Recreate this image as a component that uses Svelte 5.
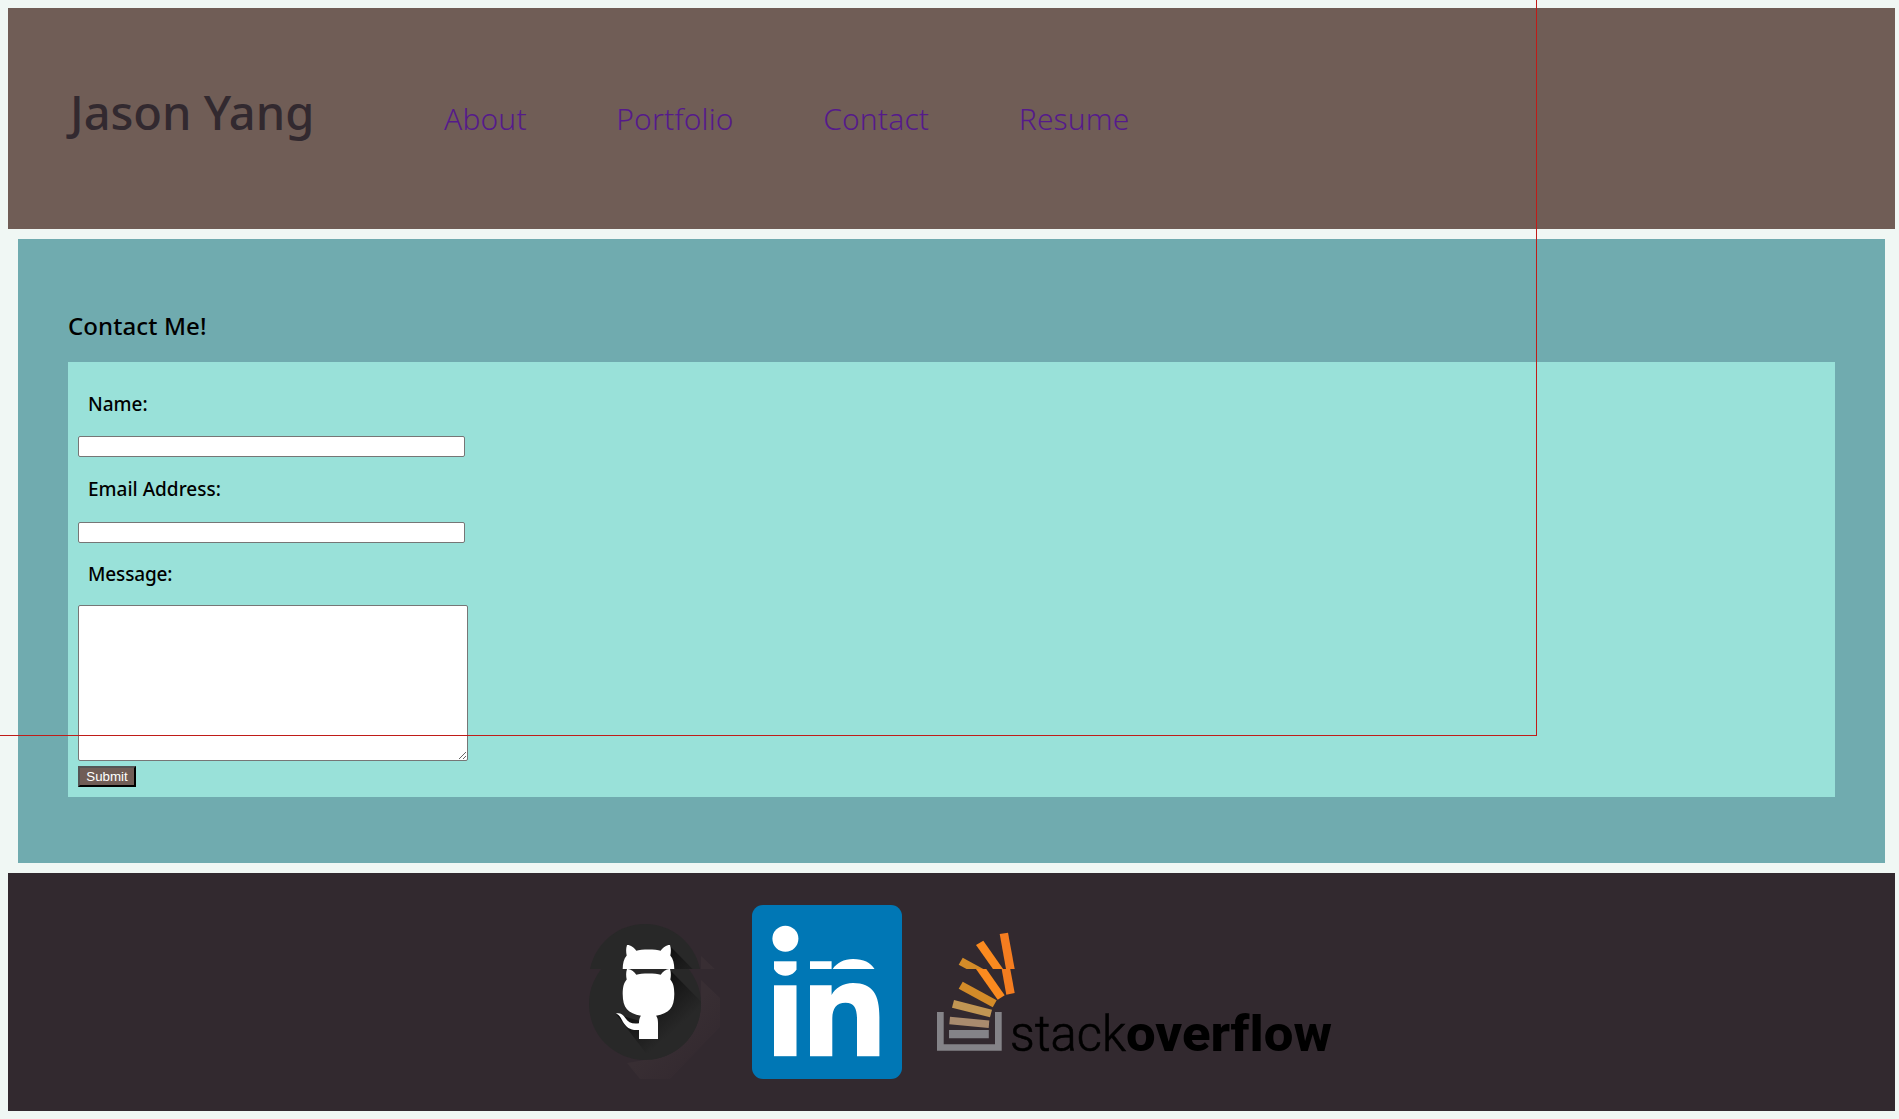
<script>
  const links = ['About', 'Portfolio', 'Contact', 'Resume'];
</script>

{#snippet github()}
  <circle cx="75" cy="75" r="56" fill="#282828" />
  <path d="M131 51L150 69V98L100 150H70L57 134L75 131A56 56 0 0 0 131 75Z" fill="url(#haze)" />
  <path d="M100 41L131 72.500A56 56 0 0 1 81 130.700L46 85L70 92L80 60Z" fill="url(#shade)" />
  <path
    d="M57 40C60.500 39.800 64 42.500 66.300 45.700C71 44 86 44 90.700 45.700C93 42.500 96.500 39.800 100 40C101.200 43.500 101 47.500 100.300 50.500C103.500 54 104.300 59 104.300 65C104.300 79 99 84.500 86 86.700C87.500 88.300 88 91 88 94V110H69V101C60.500 101.800 56.500 98.500 53 93C51 89 49.500 86 46 84.500C50 83.500 53 85.500 55.300 89C58.500 93.500 62 95.300 69 94.300C69 91 69.500 88.500 71 86.700C58 84.500 52.700 79 52.700 65C52.700 59 53.500 54 56.700 50.500C56 47.500 55.800 43.500 57 40Z"
    fill="#fff"
  />
{/snippet}

{#snippet linkedin()}
  <circle cx="33.400" cy="33.700" r="13" fill="#fff" />
  <rect x="22" y="56.300" width="22.500" height="70.900" fill="#fff" />
  <path d="M58 56.300H79.600V66C83 59 91 54 101 54C121 54 127.400 66 127.400 88V127.200H105V90C105 80 102.500 73.700 93.500 73.700C84 73.700 80.300 80 80.300 90V127.200H58Z" fill="#fff" />
{/snippet}

{#snippet stack()}
  <path d="M3 83H9.700V115.300H61V83H67.700V121.700H3Z" fill="#848388" />
  <path d="M15 101H54.800V109.300H15Z" fill="#848388" />
  <path d="M16 87.700L55.300 91.400L54.700 99L15.300 95.300Z" fill="#a98b6e" />
  <path d="M20 71L58 80.700L56 88.300L18 78.700Z" fill="#c19653" />
  <path d="M28.700 52.700L62.700 71.300L58.700 78.300L24.700 59.700Z" fill="#d38b28" />
  <path d="M49.300 35.700L70.700 66.300L63.700 70.700L42 40Z" fill="#fa8a1f" />
  <path d="M65.700 29L74 27.700L80.700 64L72.300 65.700Z" fill="#f47d20" />
{/snippet}

<div class="page">
  <header>
    <h1>Jason Yang</h1>
    <nav>
      {#each links as link}
        <a href="#{link.toLowerCase()}">{link}</a>
      {/each}
    </nav>
  </header>

  <main>
    <h2>Contact Me!</h2>
    <form>
      <label for="name">Name:</label>
      <input id="name" type="text" />
      <label class="email" for="email">Email Address:</label>
      <input id="email" type="text" />
      <label class="message" for="message">Message:</label>
      <textarea id="message"></textarea>
      <button type="button">Submit</button>
    </form>
  </main>

  <footer>
    <svg width="150" height="174" viewBox="0 0 150 174">
      <defs>
        <clipPath id="upper"><rect width="400" height="64" /></clipPath>
        <clipPath id="lower"><rect y="64" width="400" height="110" /></clipPath>
        <linearGradient id="shade" gradientUnits="userSpaceOnUse" x1="75" y1="65" x2="106" y2="100">
          <stop offset="0" stop-color="#101010" />
          <stop offset="1" stop-color="#282828" />
        </linearGradient>
        <linearGradient id="haze" gradientUnits="userSpaceOnUse" x1="100" y1="100" x2="128" y2="128">
          <stop offset="0" stop-color="#382e33" />
          <stop offset="1" stop-color="#342a30" />
        </linearGradient>
      </defs>
      <g clip-path="url(#upper)">{@render github()}</g>
      <g clip-path="url(#lower)"><g transform="translate(0 24)">{@render github()}</g></g>
    </svg>
    <svg width="150" height="174" viewBox="0 0 150 174">
      <rect width="150" height="174" rx="11" fill="#0077b5" />
      <g clip-path="url(#upper)">{@render linkedin()}</g>
      <g clip-path="url(#lower)"><g transform="translate(0 24)">{@render linkedin()}</g></g>
    </svg>
    <svg width="399" height="174" viewBox="0 0 399 174">
      <g clip-path="url(#upper)">{@render stack()}</g>
      <g clip-path="url(#lower)"><g transform="translate(0 24)">{@render stack()}</g></g>
      <text class="thin" x="76" y="145.500" textLength="116" lengthAdjust="spacingAndGlyphs">stack</text>
      <text class="heavy" x="192" y="145.500" textLength="206" lengthAdjust="spacingAndGlyphs">overflow</text>
    </svg>
  </footer>
  <div class="guide"></div>
</div>

<style>
  :global(body) {
    background: #f0f7f4;
  }
  .page {
    position: relative;
    box-sizing: border-box;
    height: 1119px;
    padding: 8px 4px 8px 8px;
    font-family: 'Noto Sans', 'Open Sans', sans-serif;
    overflow: hidden;
  }
  header {
    display: flex;
    align-items: baseline;
    box-sizing: border-box;
    height: 221px;
    padding: 70px 62px 0;
    background: #705d56;
  }
  h1 {
    width: 374px;
    margin: 0;
    color: #32292f;
    font-size: 47px;
    font-weight: 500;
    line-height: 68px;
  }
  nav {
    display: flex;
    gap: 89.500px;
    font-size: 30px;
    font-weight: 300;
    letter-spacing: 0.15px;
    line-height: 40px;
  }
  nav a {
    color: #551a8b;
    text-decoration: none;
  }
  main {
    box-sizing: border-box;
    height: 624px;
    margin: 10px;
    padding: 70px 50px 0;
    background: #70abaf;
  }
  h2 {
    margin: 0 0 20px;
    font-size: 24px;
    font-weight: 500;
    letter-spacing: 0.1px;
    line-height: 33px;
  }
  form {
    display: flex;
    flex-direction: column;
    align-items: flex-start;
    box-sizing: border-box;
    height: 435px;
    padding: 10px;
    background: #99e1d9;
  }
  label {
    margin: 19px 10px 18px;
    font-size: 19px;
    font-weight: 500;
    line-height: 27px;
  }
  .email {
    margin-bottom: 19px;
  }
  .message {
    margin: 18px 10px 17px;
    letter-spacing: -0.15px;
  }
  input,
  textarea {
    box-sizing: border-box;
    width: 387px;
    height: 21px;
    margin: 0;
    border: 1px solid #767676;
    border-radius: 2px;
    background: #fff;
  }
  textarea {
    width: 390px;
    height: 156px;
  }
  button {
    box-sizing: border-box;
    width: 58px;
    height: 21px;
    margin: 5px 0 0;
    padding: 0;
    border: 2px outset #000;
    background: #705d56;
    color: #fff;
    font: 13.333px/17px 'Liberation Sans', sans-serif;
  }
  footer {
    display: flex;
    justify-content: center;
    gap: 32px;
    box-sizing: border-box;
    height: 238px;
    padding-top: 32px;
    background: #32292f;
  }
  text {
    font-family: Roboto, sans-serif;
    font-size: 50px;
  }
  .thin {
    font-weight: 300;
    stroke: #000;
    stroke-width: 0.6px;
  }
  .heavy {
    font-weight: 800;
    font-variant-ligatures: none;
  }
  .guide {
    position: absolute;
    top: 0;
    left: 0;
    width: 1536px;
    height: 735px;
    border: solid #c01c18;
    border-width: 0 1px 1px 0;
    pointer-events: none;
  }
</style>
